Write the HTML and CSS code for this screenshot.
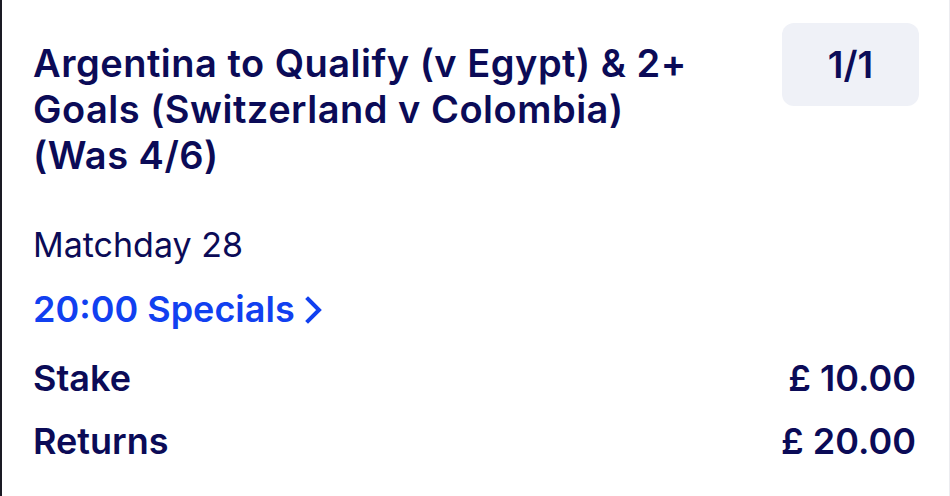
FILE: index.html
```html
<!DOCTYPE html>
<html lang="en">

<head>
    <meta charset="UTF-8">
    <meta name="viewport" content="width=device-width, initial-scale=1.0">
    <title>Bet Slip</title>

    <link rel="stylesheet" href="styles.css">
</head>

<body>

    <div class="bet-card">
        <div class="bet-header">
            <h1 class="bet-title">Argentina to Qualify (v Egypt) &amp; 2+ Goals (Switzerland v Colombia) (Was 4/6)</h1>
            <div class="odds-box">1/1</div>
        </div>

        <p class="event-name">Matchday 28</p>

        <a class="market-link" href="#">20:00 Specials
            <svg class="chevron" viewBox="0 0 18 28" width="18" height="28">
                <path d="M3 3 L14 14 L3 25" fill="none" stroke="currentColor" stroke-width="4" stroke-linecap="square"></path>
            </svg>
        </a>

        <div class="bet-row">
            <span>Stake</span>
            <span>£ 10.00</span>
        </div>
        <div class="bet-row returns">
            <span>Returns</span>
            <span>£ 20.00</span>
        </div>
    </div>

</body>

</html>
```

FILE: styles.css
```css
body {
    font-family: Inter, "Noto Sans", sans-serif;
    margin: 0;
    padding: 0;
    background-color: #1a1a24;
}

.bet-card {
    margin-left: 2px;
    height: 496px;
    box-sizing: border-box;
    background-color: white;
    border-right: 1px solid #ececf0;
    padding: 23px 30px 0 31px;
    color: #0b0b57;
}

.bet-header {
    display: flex;
    justify-content: space-between;
    align-items: flex-start;
}

.bet-title {
    font-size: 38px;
    font-weight: 600;
    line-height: 46px;
    letter-spacing: 0.5px;
    margin: 17px 0 0 0;
    max-width: 694px;
}

.odds-box {
    background-color: #eff1f7;
    border-radius: 12px;
    width: 137px;
    height: 83px;
    display: flex;
    align-items: center;
    justify-content: center;
    font-size: 37px;
    font-weight: 600;
}

.event-name {
    font-size: 34px;
    line-height: 45px;
    margin: 44px 0 0 0;
}

.market-link {
    display: flex;
    align-items: center;
    gap: 10px;
    color: #1140f0;
    text-decoration: none;
    font-size: 36px;
    font-weight: 600;
    line-height: 45px;
    margin-top: 20px;
}

.bet-row {
    display: flex;
    justify-content: space-between;
    font-size: 36px;
    font-weight: 600;
    line-height: 45px;
    margin-top: 24px;
    padding-right: 3px;
}

.bet-row.returns {
    margin-top: 18px;
}
```
